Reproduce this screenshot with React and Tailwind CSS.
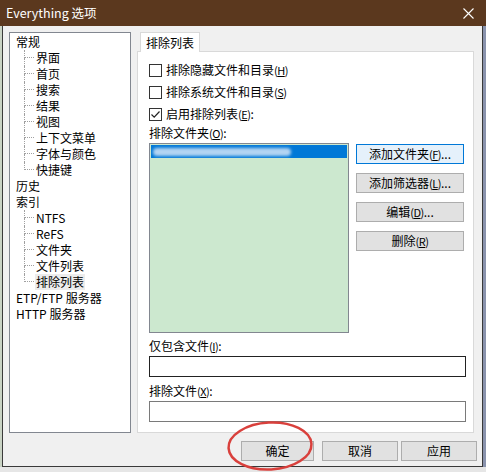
import React from "react";

const font = "font-['Noto_Sans_CJK_SC','Noto_Sans',sans-serif]";

function Key({ k }) {
  return (
    <span className="text-[11px] tracking-[-0.5px]">
      (<span className="underline underline-offset-1">{k}</span>)
    </span>
  );
}

function TreeParent({ label }) {
  return <div className="h-[16px] pl-[6px] leading-[16px] whitespace-nowrap">{label}</div>;
}

function TreeChild({ label, last, selected }) {
  return (
    <div className="flex h-[16px]">
      <div className="w-[14px]" />
      <div className="flex w-[10px] flex-col">
        <div className="h-[8px] border-b border-l border-dotted border-[#a0a0a0]" />
        <div className={`flex-1 ${last ? "" : "border-l border-dotted border-[#a0a0a0]"}`} />
      </div>
      <div
        className={`ml-[1px] px-[1px] leading-[16px] whitespace-nowrap ${
          selected ? "bg-[#ececec]" : ""
        }`}
      >
        {label}
      </div>
    </div>
  );
}

function Checkbox({ checked, children }) {
  return (
    <div className="flex h-[22px] items-center">
      <div className="flex h-[13px] w-[13px] items-center justify-center border border-[#333] bg-white">
        {checked && (
          <svg width="11" height="11" viewBox="0 0 11 11">
            <path d="M1.5 5.5 L4.2 8.2 L9.5 2.5" fill="none" stroke="#222" strokeWidth="1.2" />
          </svg>
        )}
      </div>
      <span className="ml-[4px] leading-[16px]">{children}</span>
    </div>
  );
}

function SideButton({ children, focused }) {
  return (
    <div
      className={`flex h-[20px] w-[108px] items-center justify-center border leading-[16px] ${
        focused ? "border-[#0078d7] bg-[#e5f1fb]" : "border-[#adadad] bg-[#e1e1e1]"
      }`}
    >
      {children}
    </div>
  );
}

function DialogButton({ children, w }) {
  return (
    <div
      className={`flex h-[20px] items-center justify-center border border-[#adadad] bg-[#e1e1e1] leading-[16px] ${w}`}
    >
      {children}
    </div>
  );
}

export default function App() {
  return (
    <div className={`relative flex h-[472px] w-[486px] flex-col overflow-hidden bg-[#e6e6e6] text-[12px] text-black ${font}`}>
      {/* caption bar */}
      <div className="flex h-[26px] shrink-0 items-center justify-between bg-[#5b381e] pl-[6px] pr-[12px] text-white">
        <span className="text-[12.5px] leading-[16px]">Everything 选项</span>
        <svg width="11" height="11" viewBox="0 0 11 11">
          <path d="M0.5 0.5 L10.5 10.5 M10.5 0.5 L0.5 10.5" stroke="#fff" strokeWidth="1.1" />
        </svg>
      </div>

      <div className="flex">
        <div className="w-[2px] bg-[#c9d3c4]" />
        {/* dialog body */}
        <div className="flex h-[441px] w-[481px] flex-col border-x border-b border-[#3a3a3a] bg-[#f0f0f0] pl-[6px] pr-[5px] pt-[6px]">
          <div className="flex">
            {/* category tree */}
            <div className="h-[401px] w-[122px] border border-[#828790] bg-white pt-[1px]">
              <TreeParent label="常规" />
              <TreeChild label="界面" />
              <TreeChild label="首页" />
              <TreeChild label="搜索" />
              <TreeChild label="结果" />
              <TreeChild label="视图" />
              <TreeChild label="上下文菜单" />
              <TreeChild label="字体与颜色" />
              <TreeChild label="快捷键" last />
              <TreeParent label="历史" />
              <TreeParent label="索引" />
              <TreeChild label="NTFS" />
              <TreeChild label="ReFS" />
              <TreeChild label="文件夹" />
              <TreeChild label="文件列表" />
              <TreeChild label="排除列表" last selected />
              <TreeParent label="ETP/FTP 服务器" />
              <TreeParent label="HTTP 服务器" />
            </div>

            {/* tab page */}
            <div className="ml-[6px] flex w-[337px] flex-col">
              <div className="relative z-10 -mb-px ml-[3px] flex h-[20px] w-[60px] items-center justify-center border-x border-t border-[#d9d9d9] bg-white leading-[16px]">
                排除列表
              </div>
              <div className="flex h-[382px] flex-col border border-[#d9d9d9] bg-white pl-[11px] pt-[7px]">
                <Checkbox>
                  排除隐藏文件和目录<Key k="H" />
                </Checkbox>
                <Checkbox>
                  排除系统文件和目录<Key k="S" />
                </Checkbox>
                <Checkbox checked>
                  启用排除列表<Key k="E" />:
                </Checkbox>
                <div className="h-[16px] leading-[16px]">
                  排除文件夹<Key k="O" />:
                </div>

                <div className="mt-[2px] flex">
                  <div className="h-[190px] w-[200px] border border-[#828790] bg-[#cce8cf] p-[1px]">
                    <div className="flex h-[13px] items-center overflow-hidden bg-[#0078d7]">
                      <div className="ml-[2px] h-[8px] w-[138px] rounded-full bg-[#b3d4f2] blur-[1.5px]" />
                    </div>
                  </div>
                  <div className="ml-[7px] mt-[1px] flex flex-col gap-[9px]">
                    <SideButton focused>
                      添加文件夹<Key k="F" />...
                    </SideButton>
                    <SideButton>
                      添加筛选器<Key k="L" />...
                    </SideButton>
                    <SideButton>
                      编辑<Key k="D" />...
                    </SideButton>
                    <SideButton>
                      删除<Key k="R" />
                    </SideButton>
                  </div>
                </div>

                <div className="mt-[5px] h-[16px] leading-[16px]">
                  仅包含文件<Key k="I" />:
                </div>
                <div className="mt-[2px] h-[21px] w-[317px] border border-[#222] bg-white" />
                <div className="mt-[6px] h-[16px] leading-[16px]">
                  排除文件<Key k="X" />:
                </div>
                <div className="mt-[2px] h-[21px] w-[317px] border border-[#7a7a7a] bg-white" />
              </div>
            </div>
          </div>

          {/* dialog buttons */}
          <div className="mt-[8px] flex justify-end">
            <DialogButton w="w-[73px]">确定</DialogButton>
            <div className="w-[8px]" />
            <DialogButton w="w-[76px]">取消</DialogButton>
            <div className="w-[3px]" />
            <DialogButton w="w-[76px]">应用</DialogButton>
          </div>
        </div>
        <div className="w-[3px] bg-[#8a93ad]" />
      </div>

      {/* red ring drawn around the OK button */}
      <svg
        className="pointer-events-none absolute left-[226px] top-[420px]"
        width="90"
        height="52"
        viewBox="0 0 90 52"
      >
        <ellipse cx="44" cy="26" rx="41.5" ry="23.5" fill="none" stroke="#d9403c" strokeWidth="2.5" transform="rotate(-3 44 26)" />
      </svg>
    </div>
  );
}
